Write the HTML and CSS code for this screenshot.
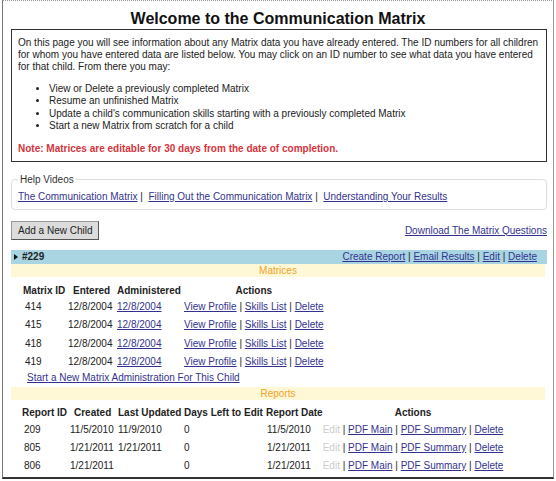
FILE: index.html
```html
<!doctype html>
<html>

<head>
  <meta charset="utf-8">
  <title>Communication Matrix</title>
  <link rel="stylesheet" href="styles.css">
</head>

<body>
  <div class="page">
    <h1>Welcome to the Communication Matrix</h1>

    <div class="intro">
      <p>On this page you will see information about any Matrix data you have already entered. The ID numbers for all children
        for whom you have entered data are listed below. You may click on an ID number to see what data you have entered
        for that child. From there you may:</p>
      <ul>
        <li>View or Delete a previously completed Matrix</li>
        <li>Resume an unfinished Matrix</li>
        <li>Update a child's communication skills starting with a previously completed Matrix</li>
        <li>Start a new Matrix from scratch for a child</li>
      </ul>
      <p class="note">Note: Matrices are editable for 30 days from the date of completion.</p>
    </div>

    <fieldset class="help">
      <legend>Help Videos</legend>
      <a href="#">The Communication Matrix</a> |&nbsp; <a href="#">Filling Out the Communication Matrix</a> |&nbsp; <a href="#">Understanding Your Results</a>
    </fieldset>

    <div class="toolbar">
      <button class="add-btn">Add a New Child</button>
      <a href="#">Download The Matrix Questions</a>
    </div>

    <div class="child-bar">
      <span class="child-id"><span class="arrow"></span>#229</span>
      <span class="child-links"><a href="#">Create Report</a> | <a href="#">Email Results</a> | <a href="#">Edit</a> | <a href="#">Delete</a></span>
    </div>

    <div class="section-bar">Matrices</div>
    <table class="matrices">
      <colgroup>
        <col class="c-id">
        <col class="c-entered">
        <col class="c-admin">
        <col>
      </colgroup>
      <tr>
        <th>Matrix ID</th>
        <th class="shift">Entered</th>
        <th>Administered</th>
        <th class="actions">Actions</th>
      </tr>
      <tr>
        <td>414</td>
        <td>12/8/2004</td>
        <td><a href="#">12/8/2004</a></td>
        <td><a href="#">View Profile</a> | <a href="#">Skills List</a> | <a href="#">Delete</a></td>
      </tr>
      <tr>
        <td>415</td>
        <td>12/8/2004</td>
        <td><a href="#">12/8/2004</a></td>
        <td><a href="#">View Profile</a> | <a href="#">Skills List</a> | <a href="#">Delete</a></td>
      </tr>
      <tr>
        <td>418</td>
        <td>12/8/2004</td>
        <td><a href="#">12/8/2004</a></td>
        <td><a href="#">View Profile</a> | <a href="#">Skills List</a> | <a href="#">Delete</a></td>
      </tr>
      <tr>
        <td>419</td>
        <td>12/8/2004</td>
        <td><a href="#">12/8/2004</a></td>
        <td><a href="#">View Profile</a> | <a href="#">Skills List</a> | <a href="#">Delete</a></td>
      </tr>
    </table>
    <div class="new-admin"><a href="#">Start a New Matrix Administration For This Child</a></div>

    <div class="section-bar">Reports</div>
    <table class="reports">
      <colgroup>
        <col class="c-rid">
        <col class="c-created">
        <col class="c-updated">
        <col class="c-days">
        <col class="c-date">
        <col>
      </colgroup>
      <tr>
        <th>Report ID</th>
        <th class="shift">Created</th>
        <th>Last Updated</th>
        <th>Days Left to Edit</th>
        <th>Report Date</th>
        <th class="actions">Actions</th>
      </tr>
      <tr>
        <td>209</td>
        <td>11/5/2010</td>
        <td>11/9/2010</td>
        <td>0</td>
        <td class="date">11/5/2010</td>
        <td><span class="disabled">Edit</span> | <a href="#">PDF Main</a> | <a href="#">PDF Summary</a> | <a href="#">Delete</a></td>
      </tr>
      <tr>
        <td>805</td>
        <td>1/21/2011</td>
        <td>1/21/2011</td>
        <td>0</td>
        <td class="date">1/21/2011</td>
        <td><span class="disabled">Edit</span> | <a href="#">PDF Main</a> | <a href="#">PDF Summary</a> | <a href="#">Delete</a></td>
      </tr>
      <tr>
        <td>806</td>
        <td>1/21/2011</td>
        <td></td>
        <td>0</td>
        <td class="date">1/21/2011</td>
        <td><span class="disabled">Edit</span> | <a href="#">PDF Main</a> | <a href="#">PDF Summary</a> | <a href="#">Delete</a></td>
      </tr>
    </table>
  </div>
</body>

</html>
```

FILE: styles.css
```css
body {
  margin: 0;
  background-color: #fff;
  font-family: "Liberation Sans", Arial, sans-serif;
  font-size: 10px;
  color: #222;
}

a {
  color: #33338f;
}

.page {
  margin-left: 2px;
  width: 550px;
  height: 476px;
  border-left: 1px solid #777;
  border-right: 1px solid #999;
  border-top: 1px dotted #999;
  border-bottom: 2px solid #333;
  overflow: hidden;
}

h1 {
  margin: 9px 0 1px;
  text-align: center;
  font-size: 16px;
  color: #111;
}

.intro {
  margin: 0 6px 0 8px;
  border: 1px solid #333;
  padding: 7px 6px 5px;
  line-height: 12px;
}

.intro p {
  margin: 0;
}

.intro ul {
  margin: 10px 0 10px;
  padding-left: 31px;
}

.intro li {
  line-height: 12.4px;
}

.intro .note {
  color: #d4343c;
  font-weight: bold;
  margin-bottom: 1px;
}

.help {
  margin: 12px 6px 0 8px;
  padding: 6px 6px 7px;
  border: 1px solid #ddd;
  border-radius: 4px;
}

.help legend {
  padding: 0 2px;
  color: #333;
}

.toolbar {
  display: flex;
  justify-content: space-between;
  align-items: center;
  margin: 11px 6px 0 8px;
}

.add-btn {
  font-family: inherit;
  font-size: 10px;
  color: #222;
  background: #dcdcdc;
  border: 1px solid #999;
  border-right-color: #555;
  border-bottom-color: #555;
  padding: 3px 6px;
}

.child-bar {
  display: flex;
  justify-content: space-between;
  margin: 10px 6px 0 8px;
  background-color: #a9d5e3;
  padding: 1px 10px 1px 3px;
  line-height: 12px;
}

.child-id {
  font-weight: bold;
}

.arrow {
  display: inline-block;
  width: 0;
  height: 0;
  border-left: 4px solid #111;
  border-top: 3px solid transparent;
  border-bottom: 3px solid transparent;
  margin-right: 4px;
}

.section-bar {
  margin: 0 8px 0 8px;
  background-color: #fff8d6;
  color: #f0a228;
  text-align: center;
  line-height: 13px;
}

table {
  border-collapse: collapse;
  margin-left: 20px;
}

th {
  font-weight: bold;
  padding: 0;
  text-align: left;
  white-space: nowrap;
}

td {
  padding: 0;
  white-space: nowrap;
}

th.actions {
  text-align: center;
}

th.shift {
  padding-left: 5px;
}

td:first-child {
  padding-left: 2px;
}

.matrices {
  margin-top: 7px;
}

.c-id {
  width: 45px;
}

.c-entered {
  width: 49px;
}

.c-admin {
  width: 67px;
}

.matrices th {
  height: 14px;
}

.matrices td {
  height: 18.2px;
}

.new-admin {
  margin: 2px 0 4px 24px;
}

.reports {
  margin-top: 5px;
  margin-left: 19px;
}

.c-rid {
  width: 48px;
}

.c-created {
  width: 48px;
}

.c-updated {
  width: 66px;
}

.c-days {
  width: 82px;
}

.c-date {
  width: 55px;
}

.reports th {
  height: 15px;
}

.reports td {
  height: 18px;
}

.reports th.shift {
  padding-left: 4px;
}

.reports td.date {
  padding-left: 1px;
}

.disabled {
  color: #ccc;
}
```
